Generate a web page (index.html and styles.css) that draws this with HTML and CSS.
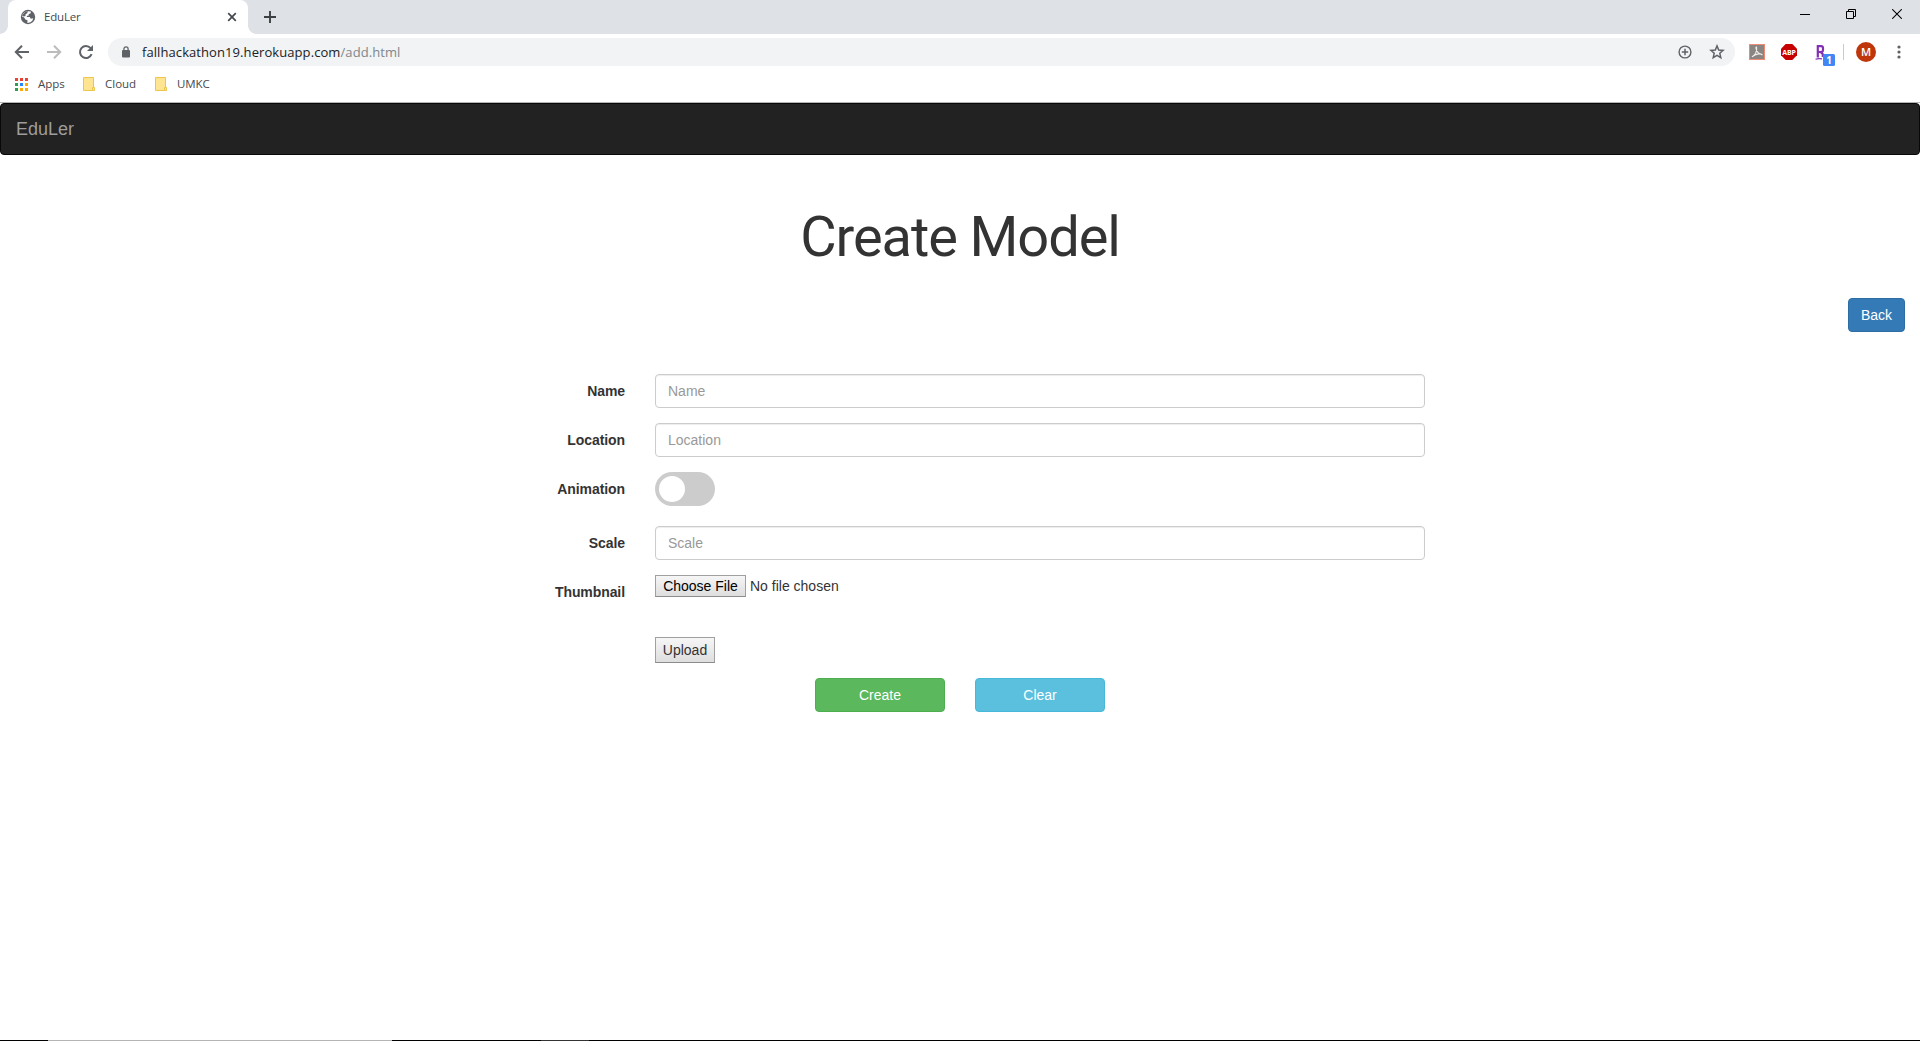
FILE: index.html
```html
<!DOCTYPE html>
<html lang="en">
<head>
<meta charset="utf-8">
<title>EduLer</title>
<link rel="stylesheet" href="styles.css">
</head>
<body>
<header class="browser">
  <div class="tabstrip">
    <div class="tab">
      <svg class="globe" width="16" height="16" viewBox="0 0 16 16"><circle cx="8" cy="8" r="7.2" fill="#5f6368"/><path d="M7.4 2.2 10.8 2.5 10.7 4.2 8.8 5.1 8.6 6.6 6.8 6.9 6.8 8 9.7 8.1 10.8 9.7 13.2 9.3 12.5 11.5 10.5 13.3 7.3 13.9 7.5 11.2 5.3 10.5 4.2 8.5 2 7.4 2.8 5 5 3z" fill="#fff"/><path d="M5.3 2.8 8 2.2 7.2 4.2 5.3 5.5 5.6 7.1 3.5 7.6 2 6.6z" fill="#5f6368"/></svg>
      <span class="tab-title">EduLer</span>
      <svg class="tab-close" width="10" height="10" viewBox="0 0 10 10"><path d="M1.2 1.2l7.6 7.6M8.8 1.2 1.2 8.8" stroke="#45494d" stroke-width="1.7"/></svg>
    </div>
    <svg class="new-tab" width="12" height="12" viewBox="0 0 12 12"><path d="M6 0v12M0 6h12" stroke="#3c4043" stroke-width="1.9"/></svg>
    <div class="window-controls">
      <svg width="10" height="10" viewBox="0 0 10 10"><path d="M0 5.5h10" stroke="#000"/></svg>
      <svg width="10" height="10" viewBox="0 0 10 10"><path d="M.5 2.5h7v7h-7zM2.5 2.5v-2h7v7h-2" fill="none" stroke="#000"/></svg>
      <svg width="10" height="10" viewBox="0 0 10 10"><path d="M.2.2l9.6 9.6M9.8.2.2 9.8" stroke="#000" stroke-width="1.05"/></svg>
    </div>
  </div>
  <div class="toolbar">
    <svg class="nav-icon" width="16" height="16" viewBox="0 0 16 16"><path d="M15 8H2.5M8 1.8 1.8 8 8 14.2" fill="none" stroke="#5f6368" stroke-width="2"/></svg>
    <svg class="nav-icon" width="16" height="16" viewBox="0 0 16 16"><path d="M1 8h12.5M8 1.8 14.2 8 8 14.2" fill="none" stroke="#babcbe" stroke-width="2"/></svg>
    <svg class="nav-icon" width="16" height="16" viewBox="0 0 16 16"><path d="M13.6 10.2A6 6 0 1 1 12.6 4.2" fill="none" stroke="#5f6368" stroke-width="2"/><path d="M15 1v6H9z" fill="#5f6368"/></svg>
    <div class="address">
      <svg class="lock" width="8" height="12" viewBox="0 0 8 12"><path d="M1.9 5V3a2.1 2.1 0 0 1 4.2 0v2" fill="none" stroke="#5f6368" stroke-width="1.3"/><rect y="4" width="8" height="7.5" rx="1" fill="#5f6368"/></svg>
      <span class="url">fallhackathon19.herokuapp.com<span class="path">/add.html</span></span>
      <svg class="zoom-icon" width="14" height="14" viewBox="0 0 14 14"><circle cx="7" cy="7" r="5.9" fill="none" stroke="#5f6368" stroke-width="1.4"/><path d="M7 3.8v6.4M3.8 7h6.4" stroke="#5f6368" stroke-width="1.5"/></svg>
      <svg class="star" width="16" height="16" viewBox="0 0 16 16"><path d="M8 1.9 9.7 6l4.4.4-3.3 2.9 1 4.3L8 11.3l-3.8 2.3 1-4.3L1.9 6.4 6.3 6z" fill="none" stroke="#5f6368" stroke-width="1.5"/></svg>
    </div>
    <svg class="ext-pdf" width="16" height="16" viewBox="0 0 16 16"><rect x=".5" y=".5" width="15" height="15" fill="#8b8581" stroke="#f08a76"/><path d="M3 12.8C6 11 8 7 7.6 3.4 7.4 2.5 6.7 3 7 4.4 7.7 7.8 9.6 10 13 10.6 13 9.4 7 9.2 3 12.8z" fill="none" stroke="#eee" stroke-width="1.1"/></svg>
    <svg class="ext-abp" width="16" height="16" viewBox="0 0 16 16"><path d="M4.7 0h6.6L16 4.7v6.6L11.3 16H4.7L0 11.3V4.7z" fill="#c70000"/><text x="8" y="10.9" text-anchor="middle" class="abp-text">ABP</text></svg>
    <svg class="ext-r" width="20" height="21" viewBox="0 0 20 21"><path d="M2.8 12.5V1.2H6A2 2 0 0 1 8 3.2V5A2 2 0 0 1 6 7H2.8M5.6 7 7.8 9.2V12" fill="none" stroke="#8430b4" stroke-width="2.2"/><path d="M.5 14.2q3-1 6.5-.3" fill="none" stroke="#8430b4" stroke-width="1.2"/><rect x="8" y="9" width="12" height="12" rx="1.5" fill="#4285f4"/><text x="14" y="18.6" text-anchor="middle" class="badge-text">1</text></svg>
    <span class="divider"></span>
    <span class="avatar">M</span>
    <svg class="menu" width="4" height="14" viewBox="0 0 4 14"><g fill="#5f6368"><circle cx="2" cy="2" r="1.6"/><circle cx="2" cy="7" r="1.6"/><circle cx="2" cy="12" r="1.6"/></g></svg>
  </div>
  <div class="bookmarks">
    <svg class="apps" width="13" height="13" viewBox="0 0 13 13"><path d="M0 0h3v3H0zM5 0h3v3H5zM10 0h3v3h-3z" fill="#ea4335"/><path d="M0 5h3v3H0zM0 10h3v3H0z" fill="#2e9e52"/><path d="M5 5h3v3H5z" fill="#2684fc"/><path d="M10 5h3v3h-3zM5 10h3v3H5zM10 10h3v3h-3z" fill="#f9ab00"/></svg>
    <span class="bm bm-apps">Apps</span>
    <svg class="folder" width="12" height="14" viewBox="0 0 12 14"><path d="M.5.5h10v13H.5z" fill="#ffe591" stroke="#ecc64c"/><path d="M9.5 10.5h2v3h-2z" fill="#ffe591" stroke="#ecc64c"/></svg>
    <span class="bm bm-cloud">Cloud</span>
    <svg class="folder" width="12" height="14" viewBox="0 0 12 14"><path d="M.5.5h10v13H.5z" fill="#ffe591" stroke="#ecc64c"/><path d="M9.5 10.5h2v3h-2z" fill="#ffe591" stroke="#ecc64c"/></svg>
    <span class="bm bm-umkc">UMKC</span>
  </div>
</header>
<main class="page">
  <nav class="navbar"><a class="brand">EduLer</a></nav>
  <h1 class="title">Create Model</h1>
  <div class="back-row"><button class="btn btn-primary">Back</button></div>
  <form class="form">
    <div class="row"><label class="label" for="name">Name</label><input class="control" id="name" placeholder="Name"></div>
    <div class="row"><label class="label" for="location">Location</label><input class="control" id="location" placeholder="Location"></div>
    <div class="row row-switch"><span class="label">Animation</span><span class="switch"><span class="knob"></span></span></div>
    <div class="row"><label class="label" for="scale">Scale</label><input class="control" id="scale" placeholder="Scale"></div>
    <div class="row row-file"><span class="label">Thumbnail</span><div class="file"><button type="button" class="native choose">Choose File</button><span>No file chosen</span></div></div>
    <div class="row row-upload"><button type="button" class="native upload">Upload</button></div>
    <div class="actions"><button type="button" class="btn btn-success">Create</button><button type="button" class="btn btn-info">Clear</button></div>
  </form>
</main>
<footer class="taskbar"><span class="task-search"></span><span class="task-active"></span></footer>
</body>
</html>
```
FILE: styles.css
```css
* { box-sizing: border-box; }
body {
  margin: 0;
  height: 1041px;
  display: flex;
  flex-direction: column;
  overflow: hidden;
  background: #fff;
  color: #333;
  font: 14px/20px "Liberation Sans", Arial, sans-serif;
}
svg { display: block; flex: none; }
button { font: inherit; cursor: pointer; }

/* Browser chrome */
.browser {
  flex: none;
  height: 103px;
  border-bottom: 1px solid #b4b4b4;
  font-family: "Open Sans", "Noto Sans", sans-serif;
}
.tabstrip {
  display: flex;
  height: 34px;
  padding-left: 8px;
  background: #dee1e6;
}
.tab {
  position: relative;
  display: flex;
  align-items: center;
  width: 240px;
  padding: 0 11px 0 12px;
  background: #fff;
  border-radius: 8px 8px 0 0;
}
.tab::before, .tab::after {
  content: "";
  position: absolute;
  bottom: 0;
  width: 8px;
  height: 8px;
}
.tab::before { left: -8px; background: radial-gradient(circle at 0 0, transparent 7.5px, #fff 8px); }
.tab::after { right: -8px; background: radial-gradient(circle at 100% 0, transparent 7.5px, #fff 8px); }
.tab-title { flex: 1; margin-left: 8px; font-size: 11.5px; letter-spacing: -.2px; color: #45494d; }
.new-tab { margin: 11px 0 0 16px; }
.window-controls { display: flex; gap: 36px; margin: 9px 18px 0 auto; }

.toolbar { display: flex; align-items: center; height: 36px; padding: 0 19px 0 14px; }
.nav-icon { margin-right: 16px; }
.address {
  flex: none;
  display: flex;
  align-items: center;
  width: 1627px;
  height: 28px;
  margin-left: -2px;
  padding: 0 10px 0 14px;
  border-radius: 14px;
  background: #f1f3f4;
}
.url { margin-left: 12px; margin-right: auto; font-size: 13px; letter-spacing: .08px; color: #202124; }
.path { color: #80868b; }
.star { margin-left: 17px; }
.ext-pdf { margin-left: 14px; }
.ext-abp { margin-left: 16px; }
.abp-text { font: bold 7px "Open Sans", sans-serif; letter-spacing: -.1px; fill: #fff; }
.ext-r { margin: 6px 0 0 18px; }
.badge-text { font: bold 10px "Open Sans", sans-serif; fill: #fff; }
.divider { flex: none; width: 1px; height: 16px; margin-left: 8px; background: #c8cacd; }
.avatar {
  flex: none;
  width: 20px;
  height: 20px;
  margin-left: 12px;
  border-radius: 50%;
  background: #bf360c;
  color: #fff;
  text-align: center;
  font: 600 11px/20px "Open Sans", sans-serif;
}
.menu { margin-left: 20.5px; }

.bookmarks { display: flex; align-items: center; height: 28px; padding-left: 15px; font-size: 11.5px; color: #45494d; }
.bm-apps { width: 45px; margin-left: 10px; }
.bm-cloud { width: 50px; margin-left: 10px; }
.bm-umkc { margin-left: 10px; letter-spacing: -.1px; }

/* Page */
.page { flex: 1; display: flex; flex-direction: column; }
.navbar {
  display: flex;
  align-items: center;
  height: 52px;
  padding: 0 15px;
  border: 1px solid #080808;
  border-radius: 4px;
  background: #222;
}
.brand { font-size: 18px; color: #9d9d9d; }
.title {
  margin: 51px 0 0;
  text-align: center;
  font: 400 56px/62px Roboto, sans-serif;
  letter-spacing: -1.1px;
}
.back-row { display: flex; justify-content: flex-end; margin-top: 30px; padding-right: 15px; }
.btn {
  height: 34px;
  padding: 6px 12px;
  border: 1px solid;
  border-radius: 4px;
  color: #fff;
  line-height: 20px;
}
.btn-primary { background: #337ab7; border-color: #2e6da4; }
.btn-success { width: 130px; background: #5cb85c; border-color: #4cae4c; }
.btn-info { width: 130px; background: #5bc0de; border-color: #46b8da; }

.form { display: flex; flex-direction: column; gap: 15px; width: 930px; margin: 42px 0 0 495px; }
.row { display: grid; grid-template-columns: 130px 770px; column-gap: 30px; height: 34px; }
.row-switch { height: 39px; }
.label { padding-top: 7px; text-align: right; font-weight: bold; letter-spacing: -.08px; }
.control {
  height: 34px;
  padding: 6px 12px;
  border: 1px solid #ccc;
  border-radius: 4px;
  box-shadow: inset 0 1px 1px rgba(0, 0, 0, .075);
  font: inherit;
}
.control::placeholder { color: #999; }
.switch { width: 60px; height: 34px; padding: 4px; border-radius: 34px; background: #ccc; }
.knob { display: block; width: 26px; height: 26px; border-radius: 50%; background: #fff; }
.row-file { height: 47px; }
.file { display: flex; height: 22px; gap: 4px; line-height: 22px; }
.native {
  padding: 0;
  border: 1px solid #a0a0a0;
  border-bottom-color: #8c8c8c;
  border-radius: 0;
  background: linear-gradient(#f6f6f6, #dedede);
}
.choose { width: 91px; height: 22px; line-height: 20px; color: #000; }
.upload { grid-column: 2; width: 60px; height: 26px; line-height: 24px; color: #333; }
.row-upload { height: 26px; }
.actions { display: flex; gap: 30px; margin-left: 320px; }

/* Top edge of the desktop taskbar */
.taskbar { flex: none; display: flex; height: 1px; padding-left: 48px; background: #000; }
.task-search { width: 344px; background: #b4b4b4; }
.task-active { width: 48px; margin-left: 149px; background: #333; }
```
